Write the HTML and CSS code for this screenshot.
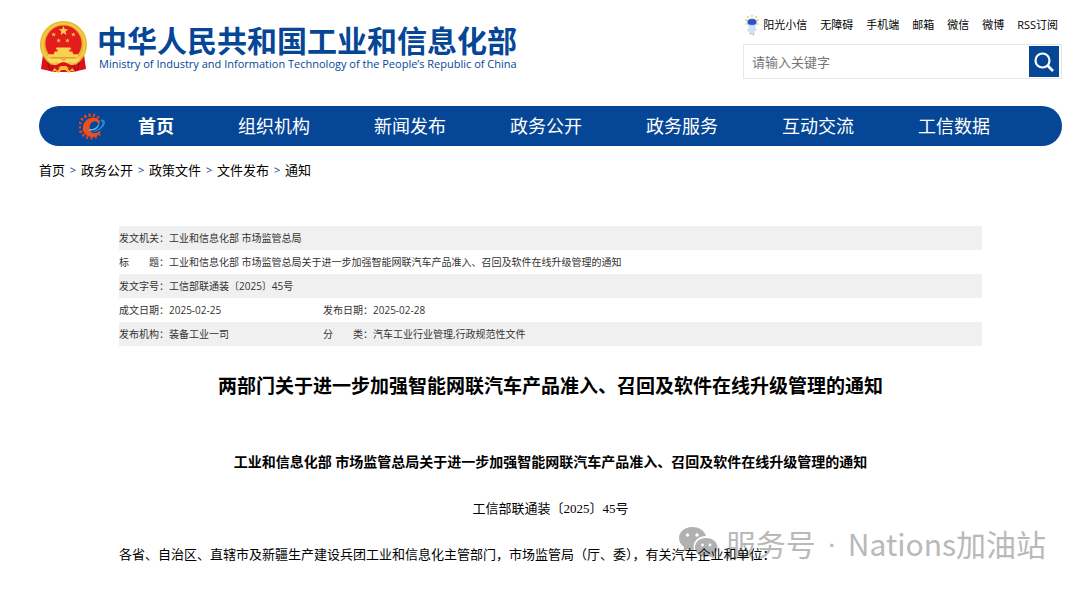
FILE: index.html
```html
<!DOCTYPE html>
<html lang="zh-CN">
<head>
<meta charset="utf-8">
<meta name="viewport" content="width=device-width, initial-scale=1">
<title>两部门关于进一步加强智能网联汽车产品准入、召回及软件在线升级管理的通知</title>
<link rel="stylesheet" href="styles.css">
</head>
<body>
<div class="page">
  <header class="header">
    <a class="brand" href="#">
      <svg class="brand-emblem" viewBox="0 0 50 54" aria-hidden="true">
        <path d="M4 36 2 50l9 2 3 1h22l3-1 9-2-2-14z" fill="#d8131b"/>
        <path d="M8 39l3 13M42 39l-3 13M14 45l-1 7M36 45l1 7" stroke="#a30d12" stroke-width="1"/>
        <circle cx="25" cy="25" r="24" fill="#e9b52f"/>
        <circle cx="25" cy="25" r="21.500" fill="none" stroke="#f3cb4c" stroke-width="2"/>
        <circle cx="25" cy="24" r="18.500" fill="#e21d1c"/>
        <path d="M25 6l1.300 3.300 3.500.2-2.700 2.300.9 3.400-3-1.900-3 1.900.9-3.400-2.700-2.300 3.500-.2z" fill="#f8d353"/>
        <g fill="#f4c744"><path id="s" d="M15 12.500l.6 1.500 1.700.1-1.300 1.100.4 1.600-1.400-.9-1.400.9.4-1.600-1.300-1.100 1.700-.1z"/><use href="#s" x="20"/><use href="#s" x="5" y="6"/><use href="#s" x="14" y="6"/></g>
        <path d="M18 28h14l1 2H17zM19 30h12v2h3l1 3H15l1-3h3zM10 35h30v3H8z" fill="#f8d353"/>
        <path d="M7 38h36l-5 5H12z" fill="#e8b534"/>
        <path d="M8 37c5 5 9 1 14 3l3 2 3-2c5-2 9 2 14-3-1 6-5 8-10 6l-5 1-2 4-2-4-5-1c-5 2-9 0-10-6z" fill="#fadb65"/>
        <path d="M13 45c5 3 7-2 12-2s7 5 12 2l-2 5-5-2-5 1-5-1-5 2z" fill="#d8131b"/>
        <path d="M13 53l3-4 3 3 3-5h6l3 5 3-3 3 4-4-1-3 2-3-3h-4l-3 3-3-2z" fill="#f1bd35"/>
      </svg>
      <span class="brand-text">
        <span class="brand-name">中华人民共和国工业和信息化部</span>
        <span class="brand-sub" lang="en">Ministry of Industry and Information Technology of the People’s Republic of China</span>
      </span>
    </a>
    <div class="tools">
      <ul class="quick-links">
        <li><a class="robot-link" href="#"><svg class="robot" viewBox="0 0 14 21" aria-hidden="true">
          <g fill="#f5cf3d"><circle cx="7" cy="1" r="1"/><circle cx="3" cy="2" r="1"/><circle cx="11" cy="2" r="1"/><circle cx="1" cy="5" r=".9"/><circle cx="13" cy="5" r=".9"/><circle cx="1" cy="9" r=".8"/><circle cx="13" cy="9" r=".8"/></g>
          <path d="M4 11h6l2 4-2 1-1 4H6l-2-3-2-1z" fill="#d5e0f4"/>
          <ellipse cx="7" cy="7.500" rx="5.500" ry="4.500" fill="#cbd9f4"/>
          <ellipse cx="7" cy="7" rx="4.500" ry="3" fill="#2854c6"/>
          <path d="M5 18l1 1M8 20l1-1" stroke="#efb93c" stroke-width="1.500"/>
        </svg>阳光小信</a></li>
        <li><a href="#">无障碍</a></li>
        <li><a href="#">手机端</a></li>
        <li><a href="#">邮箱</a></li>
        <li><a href="#">微信</a></li>
        <li><a href="#">微博</a></li>
        <li><a href="#">RSS订阅</a></li>
      </ul>
      <form class="search">
        <input class="search-input" type="text" placeholder="请输入关键字" aria-label="请输入关键字">
        <button class="search-button" type="button" aria-label="搜索"><svg class="search-icon" viewBox="0 0 20 20" aria-hidden="true"><circle cx="8.500" cy="8.500" r="7" fill="none" stroke="#fff" stroke-width="2.200"/><path d="M13.500 13.500l5.500 5.500" stroke="#fff" stroke-width="2.600"/></svg></button>
      </form>
    </div>
  </header>

  <nav class="nav" aria-label="主导航">
    <svg class="nav-logo" viewBox="0 0 26 26" aria-hidden="true">
      <path d="M19 5A11 11 0 1 0 20 20" fill="none" stroke="#d9442a" stroke-width="3" stroke-dasharray="2.200 2"/>
      <path d="M19.500 10C19 5 13 4 9 6.500 4 10 3 16 6.500 20c4 4 10 3 14-2-4 3-8 3-10 0-2-4-1-9 3-10.500 3-1 5 .5 6 2.500z" fill="#ee4f1c" stroke="#ee4f1c" stroke-width="1.500"/>
      <path d="M9.500 15.500c5 .5 8-1.500 10-6 0 5-4 8-10 7.500z" fill="#6db9e8"/>
      <path d="M19 7c3-1.500 6-1 6 2 0 5-7 10-14 9.500 6-1.500 11-5 11.500-8.500.2-1.800-1-2.700-3.500-3z" fill="#2888d0"/>
    </svg>
    <ul class="nav-list">
      <li><a class="nav-link nav-link-current" href="#">首页</a></li>
      <li><a class="nav-link" href="#">组织机构</a></li>
      <li><a class="nav-link" href="#">新闻发布</a></li>
      <li><a class="nav-link" href="#">政务公开</a></li>
      <li><a class="nav-link" href="#">政务服务</a></li>
      <li><a class="nav-link" href="#">互动交流</a></li>
      <li><a class="nav-link" href="#">工信数据</a></li>
    </ul>
  </nav>

  <nav class="crumbs" aria-label="面包屑">
    <a href="#">首页</a><span class="crumb-sep">&gt;</span><a href="#">政务公开</a><span class="crumb-sep">&gt;</span><a href="#">政策文件</a><span class="crumb-sep">&gt;</span><a href="#">文件发布</a><span class="crumb-sep">&gt;</span><a href="#">通知</a>
  </nav>

  <main class="article">
    <table class="meta">
      <colgroup><col class="meta-label"><col class="meta-value"><col class="meta-label"><col></colgroup>
      <tbody>
        <tr><th scope="row">发文机关：</th><td colspan="3">工业和信息化部 市场监管总局</td></tr>
        <tr><th scope="row">标　　题：</th><td colspan="3">工业和信息化部 市场监管总局关于进一步加强智能网联汽车产品准入、召回及软件在线升级管理的通知</td></tr>
        <tr><th scope="row">发文字号：</th><td colspan="3">工信部联通装〔2025〕45号</td></tr>
        <tr><th scope="row">成文日期：</th><td>2025-02-25</td><th scope="row">发布日期：</th><td>2025-02-28</td></tr>
        <tr><th scope="row">发布机构：</th><td>装备工业一司</td><th scope="row">分　　类：</th><td>汽车工业行业管理,行政规范性文件</td></tr>
      </tbody>
    </table>
    <h1 class="title">两部门关于进一步加强智能网联汽车产品准入、召回及软件在线升级管理的通知</h1>
    <div class="body">
      <h2 class="subtitle">工业和信息化部 市场监管总局关于进一步加强智能网联汽车产品准入、召回及软件在线升级管理的通知</h2>
      <p class="doc-number">工信部联通装〔2025〕45号</p>
      <p class="recipients">各省、自治区、直辖市及新疆生产建设兵团工业和信息化主管部门，市场监管局（厅、委），有关汽车企业和单位：</p>
    </div>
  </main>

  <div class="watermark">
    <svg class="watermark-icon" viewBox="0 0 40 34" aria-hidden="true">
      <path d="M14 1C6.500 1 1 6 1 12c0 4 2 7 5 9l-1 5 5-3c2 .6 4 .8 6 .7C14 16 20 10 28 10 26 4 21 1 14 1z" fill="#b1b1b1"/>
      <path d="M28 12c-6.500 0-11 4-11 9.500S21.500 31 28 31l4-.7 4 2.400-1-4c3-2 4.500-4 4.500-7.200C39.500 16 34.500 12 28 12z" fill="#b1b1b1"/>
      <g fill="#fff"><circle cx="9.500" cy="9" r="1.700"/><circle cx="19" cy="9" r="1.700"/><circle cx="24.500" cy="19" r="1.400"/><circle cx="32" cy="19" r="1.400"/></g>
    </svg>
    <span>服务号</span>
    <span class="watermark-dot">·</span>
    <span>Nations加油站</span>
  </div>
</div>
</body>
</html>
```
FILE: styles.css
```css
* {
  box-sizing: border-box;
}

body {
  margin: 0;
  background: #fff;
  color: #000;
  font-family: "Open Sans", "Noto Sans CJK SC", sans-serif;
  font-size: 13px;
}

a {
  color: inherit;
  text-decoration: none;
}

ul {
  display: flex;
  margin: 0;
  padding: 0;
  list-style: none;
}

.page {
  position: relative;
  padding: 14px 18px 24px 39px;
}

.header {
  display: flex;
  justify-content: space-between;
  align-items: flex-start;
  height: 92px;
}

.brand {
  display: flex;
  gap: 9px;
  padding-top: 6px;
  color: #054696;
}

.brand-emblem {
  width: 49px;
  height: 53px;
}

.brand-text {
  display: flex;
  flex-direction: column;
  padding-top: 1px;
  white-space: nowrap;
}

.brand-name {
  font-family: "Noto Sans CJK SC", sans-serif;
  font-size: 30px;
  font-weight: 700;
  line-height: 36px;
}

.brand-sub {
  padding-left: 2px;
  font-family: "Open Sans", sans-serif;
  font-size: 11px;
  line-height: 14px;
}

.tools {
  width: 319px;
}

.quick-links {
  justify-content: flex-end;
  gap: 13px;
  padding-right: 4px;
  font-size: 11px;
  line-height: 22px;
  white-space: nowrap;
}

.robot-link {
  display: flex;
  align-items: center;
  gap: 4px;
}

.robot {
  width: 14px;
  height: 21px;
}

.search {
  display: flex;
  align-items: center;
  height: 35px;
  margin-top: 8px;
  padding-right: 2px;
  border: 1px solid #e6e6e6;
}

.search-input {
  flex: 1;
  min-width: 0;
  padding: 0 8px;
  border: 0;
  outline: 0;
  background: transparent;
  font: inherit;
}

.search-input::placeholder {
  color: #757575;
}

.search-button {
  display: flex;
  align-items: center;
  justify-content: center;
  width: 30px;
  height: 31px;
  padding: 0;
  border: 0;
  background: #054696;
}

.search-icon {
  width: 20px;
  height: 20px;
}

.nav {
  display: flex;
  align-items: center;
  height: 40px;
  padding-left: 40px;
  border-radius: 20px;
  background: #054696;
  color: #fff;
}

.nav-logo {
  width: 27px;
  height: 27px;
}

.nav-link {
  display: block;
  padding: 0 32px;
  font-size: 18px;
  line-height: 40px;
  white-space: nowrap;
}

.nav-link-current {
  font-weight: 700;
}

.crumbs {
  display: flex;
  padding-top: 14px;
  line-height: 20px;
}

.crumb-sep {
  width: 16px;
  color: #054696;
  font-size: 11px;
  text-align: center;
}

.article {
  padding: 46px 80px 0;
}

.meta {
  width: 100%;
  border-collapse: collapse;
  table-layout: fixed;
  color: #333;
  font-size: 10px;
  line-height: 24px;
}

.meta tr:nth-child(odd) {
  background: #f0f0f0;
}

.meta th,
.meta td {
  padding: 0;
  font-weight: 400;
  text-align: left;
  white-space: nowrap;
}

.meta-label {
  width: 50px;
}

.meta-value {
  width: 154px;
}

.title {
  margin: 26px 0 0;
  font-size: 19px;
  line-height: 28px;
  text-align: center;
}

.body {
  position: relative;
  z-index: 1;
  padding-top: 50px;
  font-family: "Liberation Serif", "Noto Sans CJK SC", serif;
  font-size: 13px;
  line-height: 26px;
}

.subtitle {
  margin: 0;
  font-size: 14px;
  text-align: center;
}

.doc-number {
  margin: 20px 0;
  text-align: center;
}

.recipients {
  margin: 0;
}

.watermark {
  position: absolute;
  right: 34px;
  bottom: 27px;
  display: flex;
  align-items: center;
  color: #b9b9b9;
  font-family: "Noto Sans CJK SC", sans-serif;
  font-size: 30px;
  line-height: 44px;
  white-space: nowrap;
}

.watermark-icon {
  width: 40px;
  height: 34px;
  margin-right: 8px;
}

.watermark-dot {
  width: 32px;
  font-family: "Liberation Sans", sans-serif;
  text-align: center;
}
```
